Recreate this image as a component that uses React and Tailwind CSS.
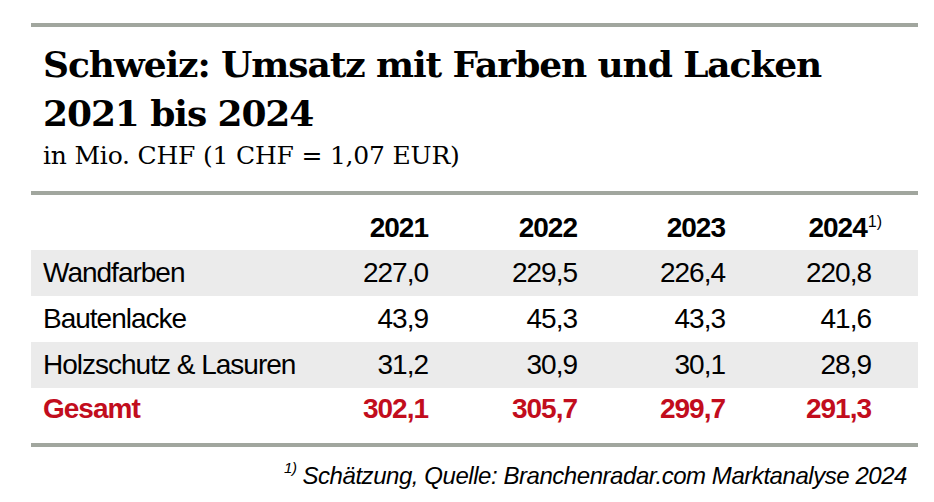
const rows = [
  { label: "Wandfarben", values: ["227,0", "229,5", "226,4", "220,8"], shade: true },
  { label: "Bautenlacke", values: ["43,9", "45,3", "43,3", "41,6"], shade: false },
  { label: "Holzschutz & Lasuren", values: ["31,2", "30,9", "30,1", "28,9"], shade: true },
];

const totals = ["302,1", "305,7", "299,7", "291,3"];

const grid = "grid grid-cols-[254px_131px_149px_148px_146px] pl-[12px]";

function App() {
  return (
    <div className="w-[934px] h-[502px] bg-white pt-[23px] pl-[31px] text-black">
      <div className="w-[887px]">
        <div className="h-[4px] bg-[#a1a69e]" />

        <div className="pl-[12px] pt-[13px] h-[164px] font-['DejaVu_Serif',serif]">
          <h1 className="text-[36px] font-bold leading-[49px] tracking-[-1.1px]">
            Schweiz: Umsatz mit Farben und Lacken
            <br />
            2021 bis 2024
          </h1>
          <p className="mt-[3px] text-[25px] leading-[30px] tracking-[-0.2px]">in Mio. CHF (1 CHF = 1,07 EUR)</p>
        </div>

        <div className="h-[4px] bg-[#a1a69e]" />

        <div className="font-['Liberation_Sans',Arial,sans-serif] text-[28px] leading-[28px] tracking-[-1px]">
          <div className={`${grid} h-[55px] items-end pb-[8px] font-bold`}>
            <div />
            <div className="text-right">2021</div>
            <div className="text-right">2022</div>
            <div className="text-right">2023</div>
            <div className="text-right">
              <span className="mr-[-11px]">
                2024<sup className="text-[16px] tracking-normal font-normal align-[2px] ml-[1px]">1)</sup>
              </span>
            </div>
          </div>

          {rows.map((r) => (
            <div
              key={r.label}
              className={`${grid} h-[46px] items-center ${r.shade ? "bg-[#ebebeb]" : "bg-white"}`}
            >
              <div>{r.label}</div>
              {r.values.map((v, i) => (
                <div key={i} className="text-right">{v}</div>
              ))}
            </div>
          ))}

          <div className={`${grid} h-[55px] pt-[7px] font-bold text-[#c20d1d]`}>
            <div>Gesamt</div>
            {totals.map((v, i) => (
              <div key={i} className="text-right">{v}</div>
            ))}
          </div>
        </div>

        <div className="h-[4px] bg-[#a1a69e]" />

        <p className="pt-[15px] pr-[11px] text-right italic font-['Liberation_Sans',Arial,sans-serif] text-[24px] leading-[28px] tracking-[-0.45px]">
          <sup className="text-[15px] align-[4px] mr-[6px]">1)</sup>
          Schätzung, Quelle: Branchenradar.com Marktanalyse 2024
        </p>
      </div>
    </div>
  );
}

export default App;
